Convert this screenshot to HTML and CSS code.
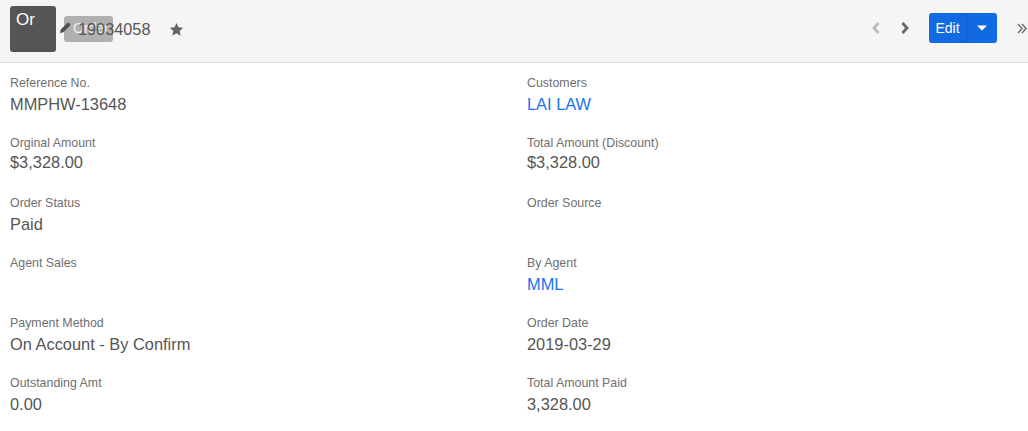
FILE: index.html
```html
<!DOCTYPE html>
<html lang="en">
<head>
<meta charset="utf-8">
<title>Order 19034058</title>
<link rel="stylesheet" href="styles.css">
</head>
<body>
<header class="topbar">
  <div class="identity">
    <div class="avatar">Or</div>
    <div class="title-wrap">
      <div class="edit-badge">
        <svg class="pencil" viewBox="0 0 13 13" width="13" height="13"><path d="M1 12l.7-3.400L8.300 2a1.200 1.200 0 0 1 1.700 0l1 1a1.200 1.200 0 0 1 0 1.700L4.400 11.300z" fill="#505050"/></svg>
        <span class="badge-text">Order</span>
      </div>
      <h1 class="title">19034058</h1>
    </div>
    <svg class="star" viewBox="0 0 24 24" width="15" height="15"><path d="M12 1.500l3.200 7 7.600.8-5.700 5.100 1.600 7.500L12 18.100 5.300 21.900l1.600-7.500L1.200 9.300l7.600-.8z" fill="#666"/></svg>
  </div>
  <div class="actions">
    <svg class="chev" viewBox="0 0 10 14" width="10" height="14"><path d="M7.500 2L3 7l4.500 5" fill="none" stroke="#bbb" stroke-width="2.800"/></svg>
    <svg class="chev chev-next" viewBox="0 0 10 14" width="10" height="14"><path d="M2.500 2L7 7l-4.500 5" fill="none" stroke="#666" stroke-width="2.800"/></svg>
    <div class="edit-group">
      <span class="edit-main">Edit</span>
      <span class="edit-caret"><svg viewBox="0 0 10 6" width="10" height="6"><path d="M0 .5h10L5 5.500z" fill="#fff"/></svg></span>
    </div>
    <svg class="more" viewBox="0 0 10 11" width="10" height="11"><path d="M1 1l4 4.500L1 10M5 1l4 4.500L5 10" fill="none" stroke="#777" stroke-width="1.700"/></svg>
  </div>
</header>
<main class="fields">
  <div class="field"><div class="label">Reference No.</div><div class="value">MMPHW-13648</div></div>
  <div class="field"><div class="label">Customers</div><div class="value link">LAI LAW</div></div>
  <div class="field"><div class="label">Orginal Amount</div><div class="value tight">$3,328.00</div></div>
  <div class="field"><div class="label">Total Amount (Discount)</div><div class="value tight">$3,328.00</div></div>
  <div class="field"><div class="label">Order Status</div><div class="value">Paid</div></div>
  <div class="field"><div class="label">Order Source</div></div>
  <div class="field"><div class="label">Agent Sales</div></div>
  <div class="field"><div class="label">By Agent</div><div class="value link">MML</div></div>
  <div class="field"><div class="label">Payment Method</div><div class="value">On Account - By Confirm</div></div>
  <div class="field"><div class="label">Order Date</div><div class="value">2019-03-29</div></div>
  <div class="field"><div class="label">Outstanding Amt</div><div class="value">0.00</div></div>
  <div class="field"><div class="label">Total Amount Paid</div><div class="value">3,328.00</div></div>
</main>
</body>
</html>
```
FILE: styles.css
```css
* { box-sizing: border-box; }
html, body { margin: 0; padding: 0; }
body {
  background: #fff;
  color: #555;
  font-family: "Liberation Sans", Arial, sans-serif;
  height: 431px;
  overflow: hidden;
}
.topbar {
  display: flex;
  align-items: center;
  justify-content: space-between;
  height: 63px;
  background: #f5f5f5;
  border-bottom: 1px solid #e0e0e0;
  padding-left: 10px;
}
.identity { display: flex; align-items: center; height: 100%; }
.avatar {
  width: 46px;
  height: 46px;
  margin-top: -4px;
  background: #555;
  border-radius: 3px;
  color: #fff;
  font-size: 17px;
  line-height: 28px;
  padding-left: 6px;
}
.title-wrap { position: relative; margin-left: 22px; margin-top: -4px; }
.edit-badge {
  position: absolute;
  left: -14px;
  top: -4px;
  width: 49px;
  height: 26px;
  background: #b0b0b0;
  border-radius: 3px;
  color: #eee;
  font-size: 14px;
  line-height: 24px;
  padding-left: 9px;
}
.pencil { position: absolute; left: -5px; top: 5px; }
.badge-text { display: block; overflow: hidden; white-space: nowrap; }
.title {
  position: relative;
  margin: 0;
  font-size: 16.300px;
  font-weight: 400;
  line-height: 18px;
  color: #555;
}
.star { margin-left: 19px; margin-top: -4px; }
.actions { display: flex; align-items: center; margin-top: -6px; }
.chev-next { margin-left: 19px; }
.edit-group {
  display: flex;
  width: 68px;
  height: 30px;
  margin-left: 19px;
  background: #126ae3;
  border-radius: 3px;
  color: #fff;
  font-size: 14px;
  line-height: 30px;
}
.edit-main { width: 38px; text-align: center; border-right: 1px solid #0f5cc7; }
.edit-caret { flex: 1; display: flex; align-items: center; justify-content: center; }
.more { margin-left: 20px; margin-right: 1px; }
.fields {
  display: grid;
  grid-template-columns: 517px 1fr;
  grid-auto-rows: 60px;
  padding: 11px 0 0 10px;
}
.label { font-size: 12.400px; line-height: 18px; color: #6f6f6f; }
.value { font-size: 16.400px; line-height: 22px; margin-top: 1px; color: #555; }
.value.tight { margin-top: -1px; }
.value.link { color: #1a73f0; }
```
